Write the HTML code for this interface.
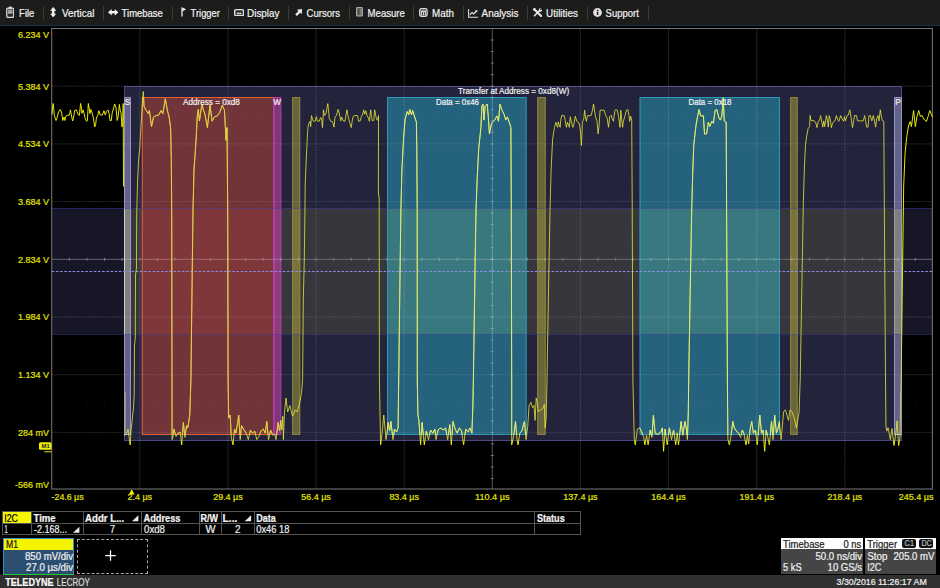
<!DOCTYPE html>
<html><head><meta charset="utf-8"><title>I2C decode</title>
<style>
html,body{margin:0;padding:0;background:#000;}
body{width:940px;height:588px;position:relative;overflow:hidden;font-family:"Liberation Sans",sans-serif;font-size:10px;color:#fff;}
#scr{position:absolute;left:0;top:0;font-family:"Liberation Sans",sans-serif}
#menu{position:absolute;left:0;top:0;width:940px;height:24.6px;background:#1c1c1b;border-bottom:1.2px solid #1c3242}
#menu svg{position:absolute}
.sep{position:absolute;top:5.5px;height:14.5px;width:1px;background:#3a3a3a}
#tbl{position:absolute;left:2.4px;top:511.1px;width:579.1px;height:23.8px;border:1px solid #545454;box-sizing:border-box;background:#000}
#tbl .hl{position:absolute;left:0;top:10.6px;width:577.1px;height:1px;background:#545454}
#tbl .vl{position:absolute;top:0;width:1px;height:21.8px;background:#545454}
#tbl .i2c{position:absolute;left:0;top:.2px;width:28px;height:10.4px;background:#f6f600}
#m1{position:absolute;left:2.7px;top:538px;width:71.8px;height:36.6px;background:#2c4e70;border:1px solid #3c8cc8;border-bottom:1.4px solid #20c840;box-sizing:border-box}
#m1 .t{position:absolute;left:0;top:0;width:69.8px;height:10.6px;background:#f4f400}
#plus{position:absolute;left:76.5px;top:538.5px;width:71px;height:35px;border:1px dashed #a8a8a8;box-sizing:border-box}
#plus svg{position:absolute;left:27.6px;top:10.2px}
#foot{position:absolute;left:0;top:575.4px;width:940px;height:12.6px;background:#303030}
.box{position:absolute;top:538px;height:36px;background:#454545}
.box .hd{position:absolute;left:0;top:0;right:0;height:10.8px;background:#fcfcfc}
.bdg{position:absolute;top:.8px;height:9px;width:14.2px;background:#111;border-radius:2px}
</style></head><body>
<div id="menu">
<svg width="8.4" height="12.2" viewBox="0 0 9 12.4" preserveAspectRatio="none" style="left:5.5px;top:5.5px"><rect x=".8" y="2.2" width="7.4" height="9.4" rx="1.3" fill="#2a2a2a" stroke="#dcdcdc" stroke-width="1.3"/><rect x="1.9" y="3.6" width="5.2" height="4.6" fill="#7a7a7a"/><rect x="2.7" y=".4" width="3.6" height="2.8" rx="1" fill="#d4d4d4"/><path d="M2.2,5h4.6M2.2,6.7h4.6" stroke="#c8c8c8" stroke-width=".8"/></svg><svg width="6.4" height="10.4" viewBox="0 0 7 11" preserveAspectRatio="none" style="left:50.1px;top:6.9px"><path d="M3.5,0L6.9,3.9H4.9V7.1H6.9L3.5,11L.1,7.1H2.1V3.9H.1z" fill="#f0f0f0"/></svg><svg width="10.4" height="6.6" viewBox="0 0 11 7" preserveAspectRatio="none" style="left:107.8px;top:9.4px"><path d="M0,3.5L3.9,.1V2.1H7.1V.1L11,3.5L7.1,6.9V4.9H3.9V6.9z" fill="#f0f0f0"/></svg><svg width="6" height="10" viewBox="0 0 6 10" style="left:180.5px;top:7.4px"><path d="M1,9.6V.6" stroke="#d0d0d0" stroke-width="1.5"/><path d="M1.4,.4L5.2,2.3L1.4,4.4z" fill="#ededed"/></svg><svg width="10.2" height="7.4" viewBox="0 0 10 8" preserveAspectRatio="none" style="left:233.7px;top:9.1px"><rect x=".7" y=".7" width="8.6" height="6.6" rx="1.3" fill="#2c2c2c" stroke="#e0e0e0" stroke-width="1.4"/><path d="M2.2,5.6L3.9,3.2L5.2,4.6L6.3,3.5L7.9,5.6z" fill="#d8d8d8"/></svg><svg width="7.4" height="7.2" viewBox="0 0 8 8" preserveAspectRatio="none" style="left:295px;top:8.6px"><path d="M8,0L7.2,5.9L5.6,4.3L2.1,7.8L.2,5.9L3.7,2.4L2.1,.8z" fill="#e8e8e8"/></svg><svg width="7.2" height="9.6" viewBox="0 0 7.2 9.6" style="left:355.8px;top:7.2px"><rect x=".7" y=".7" width="5.6" height="8.2" rx=".7" fill="#4c4c4c" stroke="#b0b0b0" stroke-width="1.2"/><path d="M3.6,2.9h1.8M3.6,4.8h1.8M3.6,6.7h1.8" stroke="#c4c4c4" stroke-width=".8"/></svg><svg width="8.8" height="9" viewBox="0 0 9 9" preserveAspectRatio="none" style="left:419.3px;top:8.3px"><rect x=".7" y=".7" width="7.6" height="7.6" rx="1.7" fill="#383838" stroke="#dcdcdc" stroke-width="1.3"/><rect x="1.8" y="2.5" width="5.4" height="1.4" fill="#e4e4e4"/><path d="M2.5,3.9V7.6M4.5,3.9V7.6M6.5,3.9V7.6" stroke="#dedede" stroke-width="1.1"/></svg><svg width="10" height="9" viewBox="0 0 10 9" style="left:467.5px;top:8.6px"><path d="M.6,0V8.2H10" fill="none" stroke="#dcdcdc" stroke-width="1.1"/><path d="M1.8,5.8L4,3.6L5.6,4.8L8.6,2" fill="none" stroke="#dcdcdc" stroke-width="1.3"/><path d="M9.4,1L9.2,3.6L6.9,1.4z" fill="#dcdcdc"/></svg><svg width="9.4" height="9.2" viewBox="0 0 10 10" preserveAspectRatio="none" style="left:532.8px;top:7.9px"><path d="M1.6,1.6L8.6,8.6" stroke="#e8e8e8" stroke-width="2.3" stroke-linecap="round"/><path d="M8.2,1.8L1.5,8.5" stroke="#e8e8e8" stroke-width="1.7" stroke-linecap="round"/><circle cx="7.9" cy="2.1" r="1.9" fill="#e8e8e8"/><circle cx="8.7" cy="1.3" r="1" fill="#1c1c1b"/><circle cx="1.5" cy="1.5" r="1.4" fill="#e8e8e8"/></svg><svg width="9" height="9" viewBox="0 0 9 9" style="left:592.5px;top:8.2px"><circle cx="4.5" cy="4.5" r="4.4" fill="#e2e2e2"/><rect x="3.8" y="3.7" width="1.5" height="3.3" fill="#1d1d1d"/><rect x="3.8" y="1.7" width="1.5" height="1.4" fill="#1d1d1d"/></svg><i class="sep" style="left:43.0px"></i><i class="sep" style="left:102.5px"></i><i class="sep" style="left:172.0px"></i><i class="sep" style="left:227.5px"></i><i class="sep" style="left:288.0px"></i><i class="sep" style="left:349.0px"></i><i class="sep" style="left:412.5px"></i><i class="sep" style="left:462.5px"></i><i class="sep" style="left:526.5px"></i><i class="sep" style="left:586.5px"></i><i class="sep" style="left:647.5px"></i>
</div>
<div id="tbl"><i class="i2c"></i><i class="hl"></i><i class="vl" style="left:28.0px"></i><i class="vl" style="left:79.4px"></i><i class="vl" style="left:138.1px"></i><i class="vl" style="left:195.4px"></i><i class="vl" style="left:217.6px"></i><i class="vl" style="left:250.5px"></i><i class="vl" style="left:531.1px"></i></div>
<div id="m1"><i class="t"></i></div>
<div id="plus"><svg width="11" height="11" viewBox="0 0 11 11"><path d="M5.5,.3V10.7M.3,5.5H10.7" stroke="#fff" stroke-width="1.25"/></svg></div>
<div id="foot"></div>
<div class="box" style="left:781px;width:81.5px"><i class="hd"></i></div>
<div class="box" style="left:864.9px;width:71.2px"><i class="hd"></i><i class="bdg" style="left:37.4px"></i><i class="bdg" style="left:54.2px"></i></div>
<svg id="scr" width="940" height="588" viewBox="0 0 940 588">
<rect x="51.7" y="208" width="880.6999999999999" height="126.5" fill="#161627"/>
<rect x="124" y="86" width="778" height="355" fill="#23233c"/>
<rect x="124" y="208" width="778" height="126.5" fill="#37363c"/>
<rect x="124.5" y="86.5" width="777" height="354" fill="none" stroke="#484880" stroke-width="1"/>
<rect x="124.0" y="97" width="7.0" height="338" fill="#62628a"/>
<rect x="124.0" y="208" width="7.0" height="126.5" fill="#7f7f82"/>
<path d="M124.5,435V97.5H130.5V435" fill="none" stroke="#a4a4c8" stroke-width="1" stroke-opacity=".8"/>
<path d="M124.5,208V334.5" fill="none" stroke="#cfcfcf" stroke-width="1"/>
<path d="M124.0,434.5H131.0" fill="none" stroke="#b4b4cc" stroke-width="1"/>
<rect x="141.8" y="97" width="131.6" height="338" fill="#713439"/>
<rect x="141.8" y="208" width="131.6" height="126.5" fill="#80373c"/>
<path d="M273.4,97.5H142.3V434.5H273.4" fill="none" stroke="#e0603a" stroke-width="1"/>
<rect x="273.4" y="97" width="7.6" height="338" fill="#7d377d"/>
<rect x="273.4" y="208" width="7.6" height="126.5" fill="#86407e"/>
<path d="M273.9,97V435" stroke="#f03cc8" stroke-width="1" fill="none"/>
<path d="M273.4,97.5H281.0V434.5H273.4" stroke="#f03cc8" stroke-width="1" fill="none" opacity=".6"/>
<rect x="292.1" y="97" width="8.1" height="338" fill="#68643c"/>
<rect x="292.1" y="208" width="8.1" height="126.5" fill="#78733c"/>
<rect x="292.6" y="97.5" width="7.1" height="337" fill="none" stroke="#8a843e" stroke-width="1"/>
<rect x="387.0" y="97" width="139.6" height="338" fill="#24627d"/>
<rect x="387.0" y="208" width="139.6" height="126.5" fill="#3a7880"/>
<rect x="387.5" y="97.5" width="138.6" height="337" fill="none" stroke="#2c98b8" stroke-width="1"/>
<rect x="537.2" y="97" width="8.5" height="338" fill="#68643c"/>
<rect x="537.2" y="208" width="8.5" height="126.5" fill="#78733c"/>
<rect x="537.7" y="97.5" width="7.5" height="337" fill="none" stroke="#8a843e" stroke-width="1"/>
<rect x="639.6" y="97" width="140.4" height="338" fill="#24627d"/>
<rect x="639.6" y="208" width="140.4" height="126.5" fill="#3a7880"/>
<rect x="640.1" y="97.5" width="139.4" height="337" fill="none" stroke="#2c98b8" stroke-width="1"/>
<rect x="790.2" y="97" width="7.5" height="338" fill="#68643c"/>
<rect x="790.2" y="208" width="7.5" height="126.5" fill="#78733c"/>
<rect x="790.7" y="97.5" width="6.5" height="337" fill="none" stroke="#8a843e" stroke-width="1"/>
<rect x="894.0" y="97" width="8.0" height="338" fill="#62628a"/>
<rect x="894.0" y="208" width="8.0" height="126.5" fill="#7f7f82"/>
<path d="M894.5,435V97.5H901.5V435" fill="none" stroke="#a4a4c8" stroke-width="1" stroke-opacity=".8"/>
<path d="M894.5,208V334.5" fill="none" stroke="#9c9c9e" stroke-width="1"/>
<path d="M894.0,434.5H902.0" fill="none" stroke="#b4b4cc" stroke-width="1"/>
<path d="M51.7,208.5H932.4M51.7,334.5H932.4" stroke="#3838a0" stroke-opacity=".45" stroke-width="1" fill="none"/>
<defs><clipPath id="cin"><rect x="124" y="86" width="778" height="355"/></clipPath><clipPath id="cout"><path clip-rule="evenodd" d="M0,0H940V588H0zM124,86H902V441H124z"/></clipPath></defs>
<defs><g id="grid">
<path d="M139.8,28.5V489.0M227.9,28.5V489.0M316.1,28.5V489.0M404.2,28.5V489.0M580.4,28.5V489.0M668.5,28.5V489.0M756.7,28.5V489.0M844.8,28.5V489.0" stroke="#fff" stroke-opacity=".15" stroke-width="1.1" stroke-dasharray="2.2 .6" fill="none"/>
<path d="M51.7,86.2H932.4M51.7,143.9H932.4M51.7,201.6H932.4M51.7,317.0H932.4M51.7,374.7H932.4M51.7,432.4H932.4" stroke="#fff" stroke-opacity=".165" stroke-width="1" stroke-dasharray="2 1" fill="none"/>
<path d="M492.3,28.5V489.0M51.7,259.3H932.4M490.6,40.0h3.4M490.6,51.6h3.4M490.6,63.1h3.4M490.6,74.7h3.4M490.6,86.2h3.4M490.6,97.7h3.4M490.6,109.3h3.4M490.6,120.8h3.4M490.6,132.4h3.4M490.6,143.9h3.4M490.6,155.4h3.4M490.6,167.0h3.4M490.6,178.5h3.4M490.6,190.1h3.4M490.6,201.6h3.4M490.6,213.1h3.4M490.6,224.7h3.4M490.6,236.2h3.4M490.6,247.8h3.4M490.6,259.3h3.4M490.6,270.8h3.4M490.6,282.4h3.4M490.6,293.9h3.4M490.6,305.5h3.4M490.6,317.0h3.4M490.6,328.5h3.4M490.6,340.1h3.4M490.6,351.6h3.4M490.6,363.2h3.4M490.6,374.7h3.4M490.6,386.2h3.4M490.6,397.8h3.4M490.6,409.3h3.4M490.6,420.9h3.4M490.6,432.4h3.4M490.6,443.9h3.4M490.6,455.5h3.4M490.6,467.0h3.4M490.6,478.6h3.4M69.3,257.6v3.4M86.9,257.6v3.4M104.6,257.6v3.4M122.2,257.6v3.4M139.8,257.6v3.4M157.4,257.6v3.4M175.1,257.6v3.4M192.7,257.6v3.4M210.3,257.6v3.4M227.9,257.6v3.4M245.6,257.6v3.4M263.2,257.6v3.4M280.8,257.6v3.4M298.4,257.6v3.4M316.1,257.6v3.4M333.7,257.6v3.4M351.3,257.6v3.4M368.9,257.6v3.4M386.6,257.6v3.4M404.2,257.6v3.4M421.8,257.6v3.4M439.4,257.6v3.4M457.1,257.6v3.4M474.7,257.6v3.4M492.3,257.6v3.4M509.9,257.6v3.4M527.5,257.6v3.4M545.2,257.6v3.4M562.8,257.6v3.4M580.4,257.6v3.4M598.0,257.6v3.4M615.7,257.6v3.4M633.3,257.6v3.4M650.9,257.6v3.4M668.5,257.6v3.4M686.2,257.6v3.4M703.8,257.6v3.4M721.4,257.6v3.4M739.0,257.6v3.4M756.7,257.6v3.4M774.3,257.6v3.4M791.9,257.6v3.4M809.5,257.6v3.4M827.2,257.6v3.4M844.8,257.6v3.4M862.4,257.6v3.4M880.0,257.6v3.4M897.7,257.6v3.4M915.3,257.6v3.4" stroke="#fff" stroke-opacity=".33" stroke-width="1" fill="none"/>
<path d="M68.8,114.5h1M86.4,114.5h1M104.1,114.5h1M121.7,114.5h1M139.3,114.5h1M156.9,114.5h1M174.6,114.5h1M192.2,114.5h1M209.8,114.5h1M227.4,114.5h1M245.1,114.5h1M262.7,114.5h1M280.3,114.5h1M297.9,114.5h1M315.6,114.5h1M333.2,114.5h1M350.8,114.5h1M368.4,114.5h1M386.1,114.5h1M403.7,114.5h1M421.3,114.5h1M438.9,114.5h1M456.6,114.5h1M474.2,114.5h1M491.8,114.5h1M509.4,114.5h1M527.0,114.5h1M544.7,114.5h1M562.3,114.5h1M579.9,114.5h1M597.5,114.5h1M615.2,114.5h1M632.8,114.5h1M650.4,114.5h1M668.0,114.5h1M685.7,114.5h1M703.3,114.5h1M720.9,114.5h1M738.5,114.5h1M756.2,114.5h1M773.8,114.5h1M791.4,114.5h1M809.0,114.5h1M826.7,114.5h1M844.3,114.5h1M861.9,114.5h1M879.5,114.5h1M897.2,114.5h1M914.8,114.5h1M68.8,402.9h1M86.4,402.9h1M104.1,402.9h1M121.7,402.9h1M139.3,402.9h1M156.9,402.9h1M174.6,402.9h1M192.2,402.9h1M209.8,402.9h1M227.4,402.9h1M245.1,402.9h1M262.7,402.9h1M280.3,402.9h1M297.9,402.9h1M315.6,402.9h1M333.2,402.9h1M350.8,402.9h1M368.4,402.9h1M386.1,402.9h1M403.7,402.9h1M421.3,402.9h1M438.9,402.9h1M456.6,402.9h1M474.2,402.9h1M491.8,402.9h1M509.4,402.9h1M527.0,402.9h1M544.7,402.9h1M562.3,402.9h1M579.9,402.9h1M597.5,402.9h1M615.2,402.9h1M632.8,402.9h1M650.4,402.9h1M668.0,402.9h1M685.7,402.9h1M703.3,402.9h1M720.9,402.9h1M738.5,402.9h1M756.2,402.9h1M773.8,402.9h1M791.4,402.9h1M809.0,402.9h1M826.7,402.9h1M844.3,402.9h1M861.9,402.9h1M879.5,402.9h1M897.2,402.9h1M914.8,402.9h1" stroke="#fff" stroke-opacity=".15" stroke-width="1" fill="none"/>
</g></defs>
<use href="#grid" clip-path="url(#cout)"/><use href="#grid" clip-path="url(#cin)" opacity=".75"/>
<rect x="51.7" y="28.5" width="880.6999999999999" height="460.5" fill="none" stroke="#707070" stroke-width="1.1"/>
<path d="M51.7,271.5H932.4" stroke="#8c8ce6" stroke-width="1" stroke-dasharray="2.6 1.6" fill="none"/>
<path d="M125.3,392V434" stroke="#e6e680" stroke-opacity=".55" stroke-width=".9" fill="none"/>
<defs><path id="wf" d="M51.9,114.6 L52.4,109.5 L53.2,103.5 L53.8,109.5 L54.3,115.4 L56.0,120.5 L56.8,118.8 L58.5,112.0 L60.2,109.5 L61.5,112.0 L62.8,120.5 L64.0,117.1 L64.9,120.5 L65.7,116.3 L67.0,115.4 L69.6,115.0 L70.4,109.9 L71.3,114.6 L72.6,121.0 L73.4,118.8 L74.7,110.3 L76.4,109.9 L78.1,114.6 L79.4,115.4 L80.6,103.5 L81.5,108.6 L81.9,113.3 L83.2,109.9 L84.0,113.3 L85.3,118.8 L86.6,121.4 L87.4,120.5 L88.3,103.5 L89.1,107.8 L90.0,113.7 L90.9,109.5 L92.1,112.9 L93.4,118.0 L94.7,126.9 L95.5,125.6 L96.4,118.0 L97.7,115.4 L98.9,110.7 L100.2,115.0 L102.3,115.0 L104.0,110.7 L105.3,115.0 L106.6,111.2 L107.9,109.9 L109.1,113.3 L110.0,120.5 L111.3,120.5 L112.1,113.3 L113.4,109.0 L114.7,103.9 L116.0,107.8 L117.2,120.5 L118.1,117.1 L119.4,104.4 L120.2,110.3 L121.1,113.3 L121.9,126.9 L122.8,123.1 L123.2,103.5 L123.5,186.5M124.0,436.0 L126.6,433.2 L128.1,429.0 L129.1,437.4 L130.2,444.9 L130.9,432.0 L131.8,424.0 L132.6,416.0 L133.5,408.0 L134.2,395.0 L134.5,345.0 L135.3,338.0 L135.5,275.0 L136.5,268.0 L136.7,215.0 L137.6,180.0 L138.6,160.0 L139.8,147.0 L140.9,127.6 L142.2,106.0 L143.3,91.5 L144.0,106.3 L146.2,110.5 L148.3,113.7 L149.4,110.5 L151.5,126.5 L153.6,116.9 L155.7,115.9 L158.9,114.8 L161.1,110.5 L162.8,113.7 L165.3,98.8 L167.4,110.5 L169.1,116.9 L170.6,127.6 L171.3,159.5 L171.7,210.0 L172.1,439.6 L172.8,437.4 L173.8,429.0 L176.0,436.4 L178.1,433.2 L180.2,432.1 L181.7,444.9 L183.4,422.5 L184.9,437.4 L186.6,425.7 L187.7,427.9 L188.7,422.5 L189.8,414.0 L190.9,380.0 L192.0,290.0 L193.0,210.0 L194.0,170.0 L196.2,138.0 L197.2,117.0 L198.3,109.5 L199.4,121.0 L201.9,104.0 L203.6,110.5 L205.1,114.8 L207.4,127.6 L210.0,105.2 L212.1,121.2 L214.3,116.9 L217.4,115.9 L219.6,112.7 L222.3,105.2 L224.5,110.5 L226.0,140.3 L227.0,127.6 L227.7,210.0 L228.1,380.0 L228.7,418.0 L230.2,415.0 L231.3,437.4 L233.0,444.9 L234.5,429.0 L236.0,433.0 L237.7,422.5 L238.7,415.0 L240.2,439.6 L241.5,425.7 L244.0,430.0 L246.2,433.2 L248.3,439.6 L250.4,430.0 L252.6,433.2 L254.7,431.0 L256.8,439.6 L258.9,436.4 L261.0,431.0 L263.2,429.0 L265.3,433.2 L266.8,421.5 L268.5,439.6 L270.6,430.0 L272.8,435.3 L274.9,434.3 L276.0,439.6 L278.1,422.5 L279.6,431.0 L280.9,420.4 L281.9,430.0 L282.8,416.2 L283.4,439.6 L284.5,412.0 L286.0,398.0 L287.7,412.0 L289.8,405.5 L292.6,416.2 L295.1,409.8 L297.2,412.0 L299.4,404.5 L301.5,392.8 L302.6,380.0 L303.3,300.0 L304.3,259.0 L304.9,215.0 L305.2,185.0 L306.3,158.0 L307.2,140.0 L307.5,133.3 L308.1,126.6 L309.1,122.8 L310.1,121.3 L310.7,126.6 L311.5,115.6 L312.5,118.9 L313.4,121.3 L315.3,120.9 L316.3,116.6 L317.2,120.9 L319.2,121.3 L320.6,117.5 L321.6,118.9 L322.5,127.6 L323.5,109.8 L324.4,115.6 L325.9,114.2 L327.8,103.6 L328.5,109.4 L329.2,118.0 L330.7,121.3 L332.6,121.8 L334.0,127.1 L335.0,117.0 L336.4,115.6 L338.1,109.4 L339.3,113.2 L340.7,120.9 L341.7,117.0 L343.1,120.9 L345.0,121.3 L346.9,109.8 L347.9,115.6 L349.3,120.9 L351.2,127.6 L352.7,118.0 L354.1,115.6 L357.5,115.6 L358.6,121.3 L360.2,120.9 L361.3,116.6 L362.7,114.2 L363.7,109.8 L364.7,114.2 L365.9,110.8 L367.0,115.6 L368.5,118.0 L369.4,121.3 L370.7,109.8 L371.4,115.6 L372.3,120.9 L373.8,120.4 L374.7,109.8 L375.7,115.6 L376.6,119.4 L377.6,120.4 L378.5,115.6 L378.4,193.0 L379.2,198.0 L379.4,380.0 L380.6,444.9 L382.3,431.0 L383.8,415.0 L386.0,439.6 L388.1,422.5 L389.6,431.0 L390.9,421.5 L393.0,439.6 L394.5,429.0 L396.6,432.0 L398.1,427.9 L398.7,380.0 L399.8,290.0 L400.9,210.0 L401.9,170.0 L403.6,138.0 L405.1,119.0 L407.2,111.6 L408.7,114.8 L409.8,109.5 L411.5,114.8 L412.6,110.5 L414.7,116.9 L416.4,122.2 L416.8,148.8 L417.2,210.0 L417.3,380.0 L417.9,415.0 L418.9,420.4 L420.6,444.9 L422.1,422.5 L424.3,444.9 L426.4,431.0 L428.5,439.6 L430.6,430.0 L432.8,433.2 L434.9,429.0 L436.0,439.6 L438.1,430.0 L440.2,427.9 L443.4,430.0 L445.5,427.9 L447.7,439.6 L449.8,424.7 L451.3,444.9 L453.0,421.5 L455.1,429.0 L457.2,433.2 L459.4,427.9 L461.5,431.0 L463.6,444.9 L465.7,429.0 L467.9,432.1 L470.0,427.9 L471.9,433.2 L472.8,407.7 L473.4,380.0 L474.7,290.0 L476.0,210.0 L477.2,178.6 L478.7,148.8 L480.9,127.6 L481.9,106.3 L483.0,104.1 L484.0,120.1 L485.1,106.3 L487.2,104.1 L488.3,116.9 L489.4,133.9 L491.5,123.3 L494.7,120.1 L496.8,115.9 L498.5,121.2 L500.0,104.1 L502.1,110.5 L504.3,114.8 L505.7,120.1 L507.4,116.9 L509.6,123.3 L510.9,127.6 L511.3,210.0 L511.7,380.0 L511.7,444.9 L513.8,435.3 L515.5,421.5 L517.0,439.6 L518.1,444.9 L519.8,433.2 L521.9,431.0 L523.4,424.7 L524.5,421.5 L526.0,439.6 L527.7,426.8 L529.1,405.5 L530.9,402.3 L532.6,407.7 L534.0,405.5 L535.1,420.4 L536.2,398.1 L537.2,402.3 L538.3,411.9 L540.4,409.8 L542.6,408.7 L544.3,404.5 L545.1,427.9 L546.2,418.3 L547.0,380.0 L548.5,290.0 L550.0,210.0 L551.1,170.0 L552.6,139.5 L553.6,132.4 L554.6,127.3 L555.9,122.3 L556.9,125.3 L557.6,127.3 L558.3,121.8 L559.1,124.8 L560.2,127.3 L560.7,120.3 L561.7,115.7 L564.2,115.7 L565.2,120.3 L566.4,127.3 L567.4,122.3 L568.7,125.3 L569.3,127.3 L570.3,116.7 L571.5,122.3 L572.8,127.3 L573.8,124.3 L575.3,116.2 L576.8,121.3 L578.9,122.8 L579.9,127.3 L580.6,133.4 L581.4,145.5 L581.9,135.4 L582.4,122.3 L583.9,118.2 L584.6,110.2 L585.4,116.7 L586.4,121.3 L587.4,115.7 L591.0,115.7 L592.5,110.2 L593.5,104.1 L594.5,110.2 L595.5,116.7 L597.0,121.3 L598.1,133.9 L599.1,125.3 L600.1,110.2 L604.1,110.2 L605.6,115.2 L607.2,118.2 L608.5,127.3 L609.7,116.7 L611.2,115.2 L612.2,118.7 L613.5,121.3 L614.7,111.2 L615.7,109.7 L617.3,110.2 L618.6,116.7 L620.0,127.3 L620.8,110.2 L621.8,120.3 L622.6,127.3 L623.3,121.3 L624.8,116.7 L626.4,110.2 L627.9,109.7 L628.9,115.2 L629.7,121.3 L630.7,116.2 L631.7,120.3 L632.2,200.0 L632.9,380.0 L634.3,439.6 L635.3,444.9 L637.4,429.0 L639.6,427.9 L641.7,432.1 L643.8,437.4 L644.9,444.9 L646.6,435.3 L648.1,444.9 L650.2,430.0 L651.9,437.4 L653.4,415.1 L655.1,433.2 L657.7,434.3 L660.9,432.1 L662.3,427.9 L663.6,451.3 L665.1,429.0 L667.2,444.9 L669.4,427.9 L671.5,439.6 L673.6,430.0 L675.7,444.9 L677.2,433.2 L678.5,444.9 L680.0,432.1 L681.1,421.5 L682.8,435.3 L684.9,421.5 L686.4,429.0 L687.4,439.6 L688.3,411.9 L688.7,380.0 L690.2,290.0 L691.7,210.0 L692.8,170.0 L693.8,144.6 L696.0,125.4 L697.7,115.9 L699.1,109.5 L700.6,115.9 L703.4,115.9 L704.5,133.9 L706.6,133.9 L708.3,122.2 L709.8,126.5 L711.9,121.2 L713.4,123.3 L715.1,110.5 L716.8,109.5 L718.9,118.0 L720.4,120.1 L721.9,115.9 L723.2,97.8 L724.3,121.2 L726.2,122.2 L726.6,210.0 L727.4,380.0 L727.9,439.6 L729.4,444.9 L731.1,435.3 L732.8,421.5 L734.3,427.9 L736.4,431.0 L738.5,433.2 L740.6,437.4 L742.3,430.0 L743.8,433.2 L746.0,444.9 L747.4,435.3 L748.7,443.8 L750.2,429.0 L751.7,421.5 L753.4,433.2 L755.5,430.0 L757.2,444.9 L758.7,427.9 L759.8,415.1 L761.5,433.2 L763.0,430.0 L764.7,451.3 L766.2,430.0 L767.9,437.4 L769.4,444.9 L771.5,421.5 L773.0,439.6 L774.7,415.1 L776.4,433.2 L777.9,429.0 L779.4,421.5 L781.1,439.6 L782.1,429.0 L783.6,411.9 L785.3,409.8 L787.0,415.1 L788.5,420.4 L790.0,409.8 L792.1,411.9 L794.3,418.3 L796.4,427.9 L798.1,418.3 L799.1,411.9 L800.2,380.0 L801.8,290.0 L803.4,200.0 L804.5,165.0 L805.5,144.6 L806.7,136.2 L808.1,128.5 L809.6,126.6 L810.1,115.6 L811.0,120.4 L814.4,120.9 L815.8,122.8 L817.0,127.6 L818.2,121.3 L819.6,120.4 L820.6,115.6 L821.6,120.9 L822.8,127.1 L823.8,120.9 L824.7,126.6 L825.7,120.9 L826.3,115.6 L827.6,120.9 L828.3,127.1 L829.2,115.6 L830.5,120.9 L831.4,127.6 L832.6,122.8 L835.0,120.9 L836.4,115.6 L837.8,119.9 L838.8,121.3 L840.7,115.6 L842.1,118.9 L843.6,121.3 L844.5,116.6 L845.5,120.9 L846.9,115.6 L848.4,115.1 L849.8,109.8 L850.8,115.6 L851.5,120.9 L852.5,127.6 L853.6,120.9 L854.6,115.6 L856.5,115.6 L857.5,120.9 L863.2,120.9 L864.7,115.6 L865.6,120.9 L866.6,127.1 L868.0,127.1 L869.0,115.6 L870.4,115.6 L871.8,120.9 L873.3,115.6 L874.5,120.9 L875.7,127.1 L876.6,118.9 L878.1,115.6 L879.0,120.9 L880.3,109.8 L881.2,115.6 L882.2,120.4 L883.8,121.3 L884.2,185.0 L885.5,380.0 L885.9,426.0 L886.9,431.1 L888.1,427.7 L890.3,439.6 L892.0,428.5 L894.0,445.5 L895.7,434.5 L897.1,420.9 L898.6,445.5 L900.0,437.9 L900.5,400.4 L901.2,380.0 L902.4,280.0 L903.7,185.0 L905.1,153.1 L906.8,136.1 L908.5,125.9 L910.2,121.6 L911.4,126.7 L913.6,110.5 L915.3,126.7 L917.0,116.5 L918.7,110.5 L920.4,116.5 L922.1,115.6 L923.8,119.0 L926.4,121.6 L928.1,116.5 L929.8,110.5 L931.5,114.8 L932.5,117.3" fill="none" stroke-linejoin="miter"/></defs>
<use href="#wf" clip-path="url(#cout)" stroke="#f4f40a" stroke-width=".95"/>
<use href="#wf" clip-path="url(#cin)" stroke="#ecea36" stroke-opacity=".93" stroke-width=".85"/>
<defs><clipPath id="ccy"><rect x="387" y="97" width="139.6" height="338"/><rect x="639.6" y="97" width="140.4" height="338"/></clipPath><clipPath id="crd"><rect x="141.8" y="97" width="139.2" height="338"/></clipPath></defs>
<use href="#wf" clip-path="url(#ccy)" stroke="#e2ec80" stroke-width=".9"/>
<use href="#wf" clip-path="url(#crd)" stroke="#e8d048" stroke-opacity=".9" stroke-width=".9"/>
<path d="M131.7,489.2 l2.9,5.4 h-5.8z" fill="#f4f000"/>
<rect x="39" y="442.2" width="12.5" height="7.6" rx="1.5" fill="#f0f000"/><path d="M44.3,451.8H51.5" stroke="#e6e600" stroke-width="1"/>
<text x="45.6" y="448.4" font-family="Liberation Sans, sans-serif" font-size="6" font-weight="bold" text-anchor="middle" fill="#222">M1</text>
<text x="513.6" y="94.3" font-family="Liberation Sans, sans-serif" font-size="8.2" fill="#f2f2f2" stroke="#f2f2f2" stroke-width=".2" text-anchor="middle" textLength="111" lengthAdjust="spacingAndGlyphs">Transfer at Address = 0xd8(W)</text>
<text x="211.4" y="104.9" font-family="Liberation Sans, sans-serif" font-size="8.2" fill="#f2f2f2" stroke="#f2f2f2" stroke-width=".2" text-anchor="middle" textLength="56.8" lengthAdjust="spacingAndGlyphs">Address = 0xd8</text>
<text x="457.5" y="104.9" font-family="Liberation Sans, sans-serif" font-size="8.2" fill="#f2f2f2" stroke="#f2f2f2" stroke-width=".2" text-anchor="middle" textLength="43" lengthAdjust="spacingAndGlyphs">Data = 0x46</text>
<text x="710" y="104.9" font-family="Liberation Sans, sans-serif" font-size="8.2" fill="#f2f2f2" stroke="#f2f2f2" stroke-width=".2" text-anchor="middle" textLength="43" lengthAdjust="spacingAndGlyphs">Data = 0x18</text>
<text x="127.6" y="104.9" font-family="Liberation Sans, sans-serif" font-size="8.2" fill="#f2f2f2" stroke="#f2f2f2" stroke-width=".2" text-anchor="middle">S</text>
<text x="277.2" y="104.9" font-family="Liberation Sans, sans-serif" font-size="8.2" fill="#f2f2f2" stroke="#f2f2f2" stroke-width=".2" text-anchor="middle">W</text>
<text x="898" y="104.9" font-family="Liberation Sans, sans-serif" font-size="8.2" fill="#f2f2f2" stroke="#f2f2f2" stroke-width=".2" text-anchor="middle">P</text>
<text x="17.9" y="37.9" font-size="9.9" fill="#e4e400" font-weight="normal" stroke="#e4e400" stroke-width=".22" textLength="31.0" lengthAdjust="spacingAndGlyphs" >6.234 V</text>
<text x="17.9" y="89.5" font-size="9.9" fill="#e4e400" font-weight="normal" stroke="#e4e400" stroke-width=".22" textLength="31.0" lengthAdjust="spacingAndGlyphs" >5.384 V</text>
<text x="17.9" y="147.2" font-size="9.9" fill="#e4e400" font-weight="normal" stroke="#e4e400" stroke-width=".22" textLength="31.0" lengthAdjust="spacingAndGlyphs" >4.534 V</text>
<text x="17.9" y="204.9" font-size="9.9" fill="#e4e400" font-weight="normal" stroke="#e4e400" stroke-width=".22" textLength="31.0" lengthAdjust="spacingAndGlyphs" >3.684 V</text>
<text x="17.9" y="262.6" font-size="9.9" fill="#e4e400" font-weight="normal" stroke="#e4e400" stroke-width=".22" textLength="31.0" lengthAdjust="spacingAndGlyphs" >2.834 V</text>
<text x="17.9" y="320.3" font-size="9.9" fill="#e4e400" font-weight="normal" stroke="#e4e400" stroke-width=".22" textLength="31.0" lengthAdjust="spacingAndGlyphs" >1.984 V</text>
<text x="17.9" y="378.0" font-size="9.9" fill="#e4e400" font-weight="normal" stroke="#e4e400" stroke-width=".22" textLength="31.0" lengthAdjust="spacingAndGlyphs" >1.134 V</text>
<text x="18.1" y="435.7" font-size="9.9" fill="#e4e400" font-weight="normal" stroke="#e4e400" stroke-width=".22" textLength="30.8" lengthAdjust="spacingAndGlyphs" >284 mV</text>
<text x="15.1" y="487.7" font-size="9.9" fill="#e4e400" font-weight="normal" stroke="#e4e400" stroke-width=".22" textLength="33.8" lengthAdjust="spacingAndGlyphs" >-566 mV</text>
<text x="51.6" y="500.0" font-size="9.9" fill="#e4e400" font-weight="normal" stroke="#e4e400" stroke-width=".22" textLength="32.0" lengthAdjust="spacingAndGlyphs" >-24.6 µs</text>
<text x="127.6" y="500.0" font-size="9.9" fill="#e4e400" font-weight="normal" stroke="#e4e400" stroke-width=".22" textLength="24.4" lengthAdjust="spacingAndGlyphs" >2.4 µs</text>
<text x="213.2" y="500.0" font-size="9.9" fill="#e4e400" font-weight="normal" stroke="#e4e400" stroke-width=".22" textLength="29.5" lengthAdjust="spacingAndGlyphs" >29.4 µs</text>
<text x="301.3" y="500.0" font-size="9.9" fill="#e4e400" font-weight="normal" stroke="#e4e400" stroke-width=".22" textLength="29.5" lengthAdjust="spacingAndGlyphs" >56.4 µs</text>
<text x="389.4" y="500.0" font-size="9.9" fill="#e4e400" font-weight="normal" stroke="#e4e400" stroke-width=".22" textLength="29.5" lengthAdjust="spacingAndGlyphs" >83.4 µs</text>
<text x="475.1" y="500.0" font-size="9.9" fill="#e4e400" font-weight="normal" stroke="#e4e400" stroke-width=".22" textLength="34.4" lengthAdjust="spacingAndGlyphs" >110.4 µs</text>
<text x="563.2" y="500.0" font-size="9.9" fill="#e4e400" font-weight="normal" stroke="#e4e400" stroke-width=".22" textLength="34.4" lengthAdjust="spacingAndGlyphs" >137.4 µs</text>
<text x="651.3" y="500.0" font-size="9.9" fill="#e4e400" font-weight="normal" stroke="#e4e400" stroke-width=".22" textLength="34.4" lengthAdjust="spacingAndGlyphs" >164.4 µs</text>
<text x="739.5" y="500.0" font-size="9.9" fill="#e4e400" font-weight="normal" stroke="#e4e400" stroke-width=".22" textLength="34.4" lengthAdjust="spacingAndGlyphs" >191.4 µs</text>
<text x="827.6" y="500.0" font-size="9.9" fill="#e4e400" font-weight="normal" stroke="#e4e400" stroke-width=".22" textLength="34.4" lengthAdjust="spacingAndGlyphs" >218.4 µs</text>
<text x="898.7" y="500.0" font-size="9.9" fill="#e4e400" font-weight="normal" stroke="#e4e400" stroke-width=".22" textLength="34.8" lengthAdjust="spacingAndGlyphs" >245.4 µs</text>
<text x="19.1" y="16.6" font-size="10.6" fill="#f0f0f0" font-weight="normal" stroke="#f0f0f0" stroke-width=".22" textLength="15.3" lengthAdjust="spacingAndGlyphs" >File</text>
<text x="62.1" y="16.6" font-size="10.6" fill="#f0f0f0" font-weight="normal" stroke="#f0f0f0" stroke-width=".22" textLength="32.3" lengthAdjust="spacingAndGlyphs" >Vertical</text>
<text x="121.6" y="16.6" font-size="10.6" fill="#f0f0f0" font-weight="normal" stroke="#f0f0f0" stroke-width=".22" textLength="41.3" lengthAdjust="spacingAndGlyphs" >Timebase</text>
<text x="190.6" y="16.6" font-size="10.6" fill="#f0f0f0" font-weight="normal" stroke="#f0f0f0" stroke-width=".22" textLength="29.3" lengthAdjust="spacingAndGlyphs" >Trigger</text>
<text x="247.1" y="16.6" font-size="10.6" fill="#f0f0f0" font-weight="normal" stroke="#f0f0f0" stroke-width=".22" textLength="32.3" lengthAdjust="spacingAndGlyphs" >Display</text>
<text x="306.6" y="16.6" font-size="10.6" fill="#f0f0f0" font-weight="normal" stroke="#f0f0f0" stroke-width=".22" textLength="33.3" lengthAdjust="spacingAndGlyphs" >Cursors</text>
<text x="367.6" y="16.6" font-size="10.6" fill="#f0f0f0" font-weight="normal" stroke="#f0f0f0" stroke-width=".22" textLength="37.3" lengthAdjust="spacingAndGlyphs" >Measure</text>
<text x="432.1" y="16.6" font-size="10.6" fill="#f0f0f0" font-weight="normal" stroke="#f0f0f0" stroke-width=".22" textLength="21.8" lengthAdjust="spacingAndGlyphs" >Math</text>
<text x="481.6" y="16.6" font-size="10.6" fill="#f0f0f0" font-weight="normal" stroke="#f0f0f0" stroke-width=".22" textLength="36.8" lengthAdjust="spacingAndGlyphs" >Analysis</text>
<text x="546.1" y="16.6" font-size="10.6" fill="#f0f0f0" font-weight="normal" stroke="#f0f0f0" stroke-width=".22" textLength="31.8" lengthAdjust="spacingAndGlyphs" >Utilities</text>
<text x="605.6" y="16.6" font-size="10.6" fill="#f0f0f0" font-weight="normal" stroke="#f0f0f0" stroke-width=".22" textLength="33.3" lengthAdjust="spacingAndGlyphs" >Support</text>
<text x="4.2" y="521.8" font-size="10.4" fill="#000" font-weight="normal" stroke="#000" stroke-width=".22" textLength="13.7" lengthAdjust="spacingAndGlyphs" >I2C</text>
<text x="33.5" y="522.0" font-size="10.4" fill="#f4f4f4" font-weight="bold" stroke="#f4f4f4" stroke-width=".22" textLength="22.0" lengthAdjust="spacingAndGlyphs" >Time</text>
<text x="85.0" y="522.0" font-size="10.4" fill="#f4f4f4" font-weight="bold" stroke="#f4f4f4" stroke-width=".22" textLength="39.2" lengthAdjust="spacingAndGlyphs" >Addr L...</text>
<text x="143.5" y="522.0" font-size="10.4" fill="#f4f4f4" font-weight="bold" stroke="#f4f4f4" stroke-width=".22" textLength="37.0" lengthAdjust="spacingAndGlyphs" >Address</text>
<text x="200.5" y="522.0" font-size="10.4" fill="#f4f4f4" font-weight="bold" stroke="#f4f4f4" stroke-width=".22" textLength="17.5" lengthAdjust="spacingAndGlyphs" >R/W</text>
<text x="222.5" y="522.0" font-size="10.4" fill="#f4f4f4" font-weight="bold" stroke="#f4f4f4" stroke-width=".22" textLength="14.9" lengthAdjust="spacingAndGlyphs" >L...</text>
<text x="256.2" y="522.0" font-size="10.4" fill="#f4f4f4" font-weight="bold" stroke="#f4f4f4" stroke-width=".22" textLength="19.5" lengthAdjust="spacingAndGlyphs" >Data</text>
<text x="537.0" y="522.0" font-size="10.4" fill="#f4f4f4" font-weight="bold" stroke="#f4f4f4" stroke-width=".22" textLength="27.7" lengthAdjust="spacingAndGlyphs" >Status</text>
<text x="4.6" y="533.4" font-size="10.4" fill="#f0f0f0" font-weight="normal" stroke="#f0f0f0" stroke-width=".22" textLength="3.2" lengthAdjust="spacingAndGlyphs" >1</text>
<text x="34.0" y="533.4" font-size="10.4" fill="#f0f0f0" font-weight="normal" stroke="#f0f0f0" stroke-width=".22" textLength="33.0" lengthAdjust="spacingAndGlyphs" >-2.168...</text>
<text x="110.0" y="533.4" font-size="10.4" fill="#f0f0f0" font-weight="normal" stroke="#f0f0f0" stroke-width=".22" textLength="5.0" lengthAdjust="spacingAndGlyphs" >7</text>
<text x="144.0" y="533.4" font-size="10.4" fill="#f0f0f0" font-weight="normal" stroke="#f0f0f0" stroke-width=".22" textLength="21.0" lengthAdjust="spacingAndGlyphs" >0xd8</text>
<text x="205.5" y="533.4" font-size="10.4" fill="#f0f0f0" font-weight="normal" stroke="#f0f0f0" stroke-width=".22" textLength="10.0" lengthAdjust="spacingAndGlyphs" >W</text>
<text x="234.9" y="533.4" font-size="10.4" fill="#f0f0f0" font-weight="normal" stroke="#f0f0f0" stroke-width=".22" textLength="5.5" lengthAdjust="spacingAndGlyphs" >2</text>
<text x="256.2" y="533.4" font-size="10.4" fill="#f0f0f0" font-weight="normal" stroke="#f0f0f0" stroke-width=".22" textLength="33.2" lengthAdjust="spacingAndGlyphs" >0x46 18</text>
<path d="M132,521.3h6.4v-6z" fill="#ececec"/>
<path d="M244.7,521.3h6.4v-6z" fill="#ececec"/>
<path d="M73,532.8h6.4v-6z" fill="#ececec"/>
<text x="6.0" y="547.5" font-size="10.4" fill="#111" font-weight="normal" stroke="#111" stroke-width=".22" textLength="12.0" lengthAdjust="spacingAndGlyphs" >M1</text>
<text x="25.0" y="560.0" font-size="10.4" fill="#f2f2f2" font-weight="normal" stroke="#f2f2f2" stroke-width=".22" textLength="48.0" lengthAdjust="spacingAndGlyphs" >850 mV/div</text>
<text x="26.0" y="570.8" font-size="10.4" fill="#f2f2f2" font-weight="normal" stroke="#f2f2f2" stroke-width=".22" textLength="47.0" lengthAdjust="spacingAndGlyphs" >27.0 µs/div</text>
<text x="5.2" y="585.6" font-size="10.6" fill="#fafafa" font-weight="bold" stroke="#fafafa" stroke-width=".22" textLength="48.5" lengthAdjust="spacingAndGlyphs" >TELEDYNE</text>
<text x="56.8" y="585.6" font-size="10.6" fill="#dcdcdc" font-weight="normal" stroke="#dcdcdc" stroke-width=".22" textLength="33.2" lengthAdjust="spacingAndGlyphs" >LECROY</text>
<text x="783.0" y="547.6" font-size="10.4" fill="#222" font-weight="normal" stroke="#222" stroke-width=".22" textLength="41.6" lengthAdjust="spacingAndGlyphs" >Timebase</text>
<text x="843.5" y="547.6" font-size="10.4" fill="#222" font-weight="normal" stroke="#222" stroke-width=".22" textLength="17.8" lengthAdjust="spacingAndGlyphs" >0 ns</text>
<text x="815.4" y="560.2" font-size="10.4" fill="#f0f0f0" font-weight="normal" stroke="#f0f0f0" stroke-width=".22" textLength="46.7" lengthAdjust="spacingAndGlyphs" >50.0 ns/div</text>
<text x="783.0" y="571.0" font-size="10.4" fill="#f0f0f0" font-weight="normal" stroke="#f0f0f0" stroke-width=".22" textLength="18.6" lengthAdjust="spacingAndGlyphs" >5 kS</text>
<text x="827.6" y="571.0" font-size="10.4" fill="#f0f0f0" font-weight="normal" stroke="#f0f0f0" stroke-width=".22" textLength="34.5" lengthAdjust="spacingAndGlyphs" >10 GS/s</text>
<text x="867.2" y="547.6" font-size="10.4" fill="#222" font-weight="normal" stroke="#222" stroke-width=".22" textLength="29.9" lengthAdjust="spacingAndGlyphs" >Trigger</text>
<text x="904.6" y="545.7" font-size="8.2" fill="#b4b4b4" font-weight="normal" stroke="#b4b4b4" stroke-width=".22" textLength="9.4" lengthAdjust="spacingAndGlyphs" >C1</text>
<text x="921.4" y="545.7" font-size="8.2" fill="#b4b4b4" font-weight="normal" stroke="#b4b4b4" stroke-width=".22" textLength="10.4" lengthAdjust="spacingAndGlyphs" >DC</text>
<text x="867.2" y="560.2" font-size="10.4" fill="#f0f0f0" font-weight="normal" stroke="#f0f0f0" stroke-width=".22" textLength="20.4" lengthAdjust="spacingAndGlyphs" >Stop</text>
<text x="893.5" y="560.2" font-size="10.4" fill="#f0f0f0" font-weight="normal" stroke="#f0f0f0" stroke-width=".22" textLength="40.9" lengthAdjust="spacingAndGlyphs" >205.0 mV</text>
<text x="867.2" y="571.0" font-size="10.4" fill="#f0f0f0" font-weight="normal" stroke="#f0f0f0" stroke-width=".22" textLength="14.1" lengthAdjust="spacingAndGlyphs" >I2C</text>
<text x="836.6" y="584.8" font-size="9.9" fill="#f0f0f0" font-weight="normal" stroke="#f0f0f0" stroke-width=".22" textLength="90.1" lengthAdjust="spacingAndGlyphs" >3/30/2016 11:26:17 AM</text>
</svg>
</body></html>
